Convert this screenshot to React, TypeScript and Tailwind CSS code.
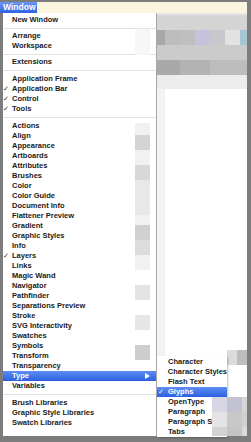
import React from "react";

type Item = { label: string; check?: boolean; active?: boolean; sub?: boolean } | "sep";

const items: Item[] = [
  { label: "New Window" },
  "sep",
  { label: "Arrange" },
  { label: "Workspace" },
  "sep",
  { label: "Extensions" },
  "sep",
  { label: "Application Frame" },
  { label: "Application Bar", check: true },
  { label: "Control", check: true },
  { label: "Tools", check: true },
  "sep",
  { label: "Actions" },
  { label: "Align" },
  { label: "Appearance" },
  { label: "Artboards" },
  { label: "Attributes" },
  { label: "Brushes" },
  { label: "Color" },
  { label: "Color Guide" },
  { label: "Document Info" },
  { label: "Flattener Preview" },
  { label: "Gradient" },
  { label: "Graphic Styles" },
  { label: "Info" },
  { label: "Layers", check: true },
  { label: "Links" },
  { label: "Magic Wand" },
  { label: "Navigator" },
  { label: "Pathfinder" },
  { label: "Separations Preview" },
  { label: "Stroke" },
  { label: "SVG Interactivity" },
  { label: "Swatches" },
  { label: "Symbols" },
  { label: "Transform" },
  { label: "Transparency" },
  { label: "Type", active: true, sub: true },
  { label: "Variables" },
  "sep",
  { label: "Brush Libraries" },
  { label: "Graphic Style Libraries" },
  { label: "Swatch Libraries" },
];

const subItems: { label: string; check?: boolean; active?: boolean }[] = [
  { label: "Character" },
  { label: "Character Styles" },
  { label: "Flash Text" },
  { label: "Glyphs", check: true, active: true },
  { label: "OpenType" },
  { label: "Paragraph" },
  { label: "Paragraph S" },
  { label: "Tabs" },
];

// redaction mosaic over the shortcut column (heights in px, colours)
const shortcutBlocks: [number, string][] = [
  [16, "transparent"],
  [26, "#f6f6f6"],
  [68, "transparent"],
  [12, "#f0f0f0"],
  [15, "#d0cfd0"],
  [15, "#f0f0f0"],
  [15, "#d4d4d4"],
  [35, "#e6e6e6"],
  [10, "#f0f0f0"],
  [15, "#cbcbcb"],
  [15, "#d8d8d8"],
  [15, "#f0f0f0"],
  [15, "transparent"],
  [15, "#e0e0e0"],
  [15, "transparent"],
  [15, "#e3e3e3"],
  [15, "transparent"],
  [15, "#c8c8c8"],
];

const font = { fontFamily: '"Liberation Sans", Arial, sans-serif' };
const checkFont = { fontFamily: '"DejaVu Sans", sans-serif' };

export default function App() {
  let sepIndex = 0;
  return (
    <div
      className="w-[251px] h-[442px] bg-[#7c7c7c] pt-[2px] pr-[4px] pb-[6px] flex flex-col overflow-hidden"
      style={font}
    >
      {/* menu bar */}
      <div className="h-[11px] flex shrink-0">
        <div className="w-[37px] h-full bg-gradient-to-b from-[#6b96f2] to-[#2f62e2] text-white text-[8.5px] font-bold leading-[11px] pl-[3px]">
          Window
        </div>
        <div className="flex-1 h-full bg-[#fbf4df]" />
      </div>

      {/* main */}
      <div className="flex-1 flex pl-[3px] min-h-0">
        <div className="flex-1 relative flex">
          {/* menu */}
          <div className="w-[154px] h-full bg-white border-r border-[#a6a6a6] pt-[2px] flex flex-col relative">
            {items.map((it, i) => {
              if (it === "sep") {
                sepIndex++;
                const h = sepIndex <= 2 ? "h-[6px]" : "h-[7px]";
                return (
                  <div key={i} className={`${h} flex items-center`}>
                    <div className="w-full h-px bg-[#e3e3e3]" />
                  </div>
                );
              }
              return (
                <div
                  key={i}
                  className={`h-[10px] flex items-center text-[7.5px] font-bold leading-[10px] ${
                    it.active
                      ? "bg-gradient-to-b from-[#5f8ef4] to-[#2c5fe0] text-white"
                      : "text-[#1a1a1a]"
                  }`}
                >
                  <span className="w-[9px] text-[7px] leading-[10px] text-[#333]" style={checkFont}>
                    {it.check ? "✓" : ""}
                  </span>
                  <span className="flex-1 whitespace-nowrap">{it.label}</span>
                  {it.sub && (
                    <svg width="5" height="6" viewBox="0 0 5 6" className="mr-[6px]">
                      <path d="M0 0 L5 3 L0 6 Z" fill="white" />
                    </svg>
                  )}
                </div>
              );
            })}
            <div className="flex-1" />
            {/* shortcut mosaic overlay */}
            <div className="absolute left-[132px] top-0 w-[15px] flex flex-col pointer-events-none">
              {shortcutBlocks.map(([h, c], i) => (
                <div key={i} style={{ height: h, background: c, opacity: c === "transparent" ? 0 : 0.9 }} />
              ))}
            </div>
          </div>

          {/* background window (blurred) */}
          <div className="flex-1 h-full flex flex-col bg-white">
            <div className="h-[2px] bg-[#e6e6e6]" />
            <div className="h-[15px] bg-[#d4d4d4]" />
            <div className="h-[15px] flex">
              <div className="w-[8px] bg-[#a8a8a8]" />
              <div className="w-[15px] bg-[#bdbdbd]" />
              <div className="w-[15px] bg-[#bfbfbf]" />
              <div className="w-[15px] bg-[#c4c2dc]" />
              <div className="w-[15px] bg-[#c8c8cc]" />
              <div className="w-[15px] bg-[#e2e2e2]" />
              <div className="flex-1 bg-[#a6c6d6]" />
            </div>
            <div className="h-[15px] bg-[#cbcbcb]" />
            <div className="h-[15px] flex">
              <div className="w-[23px] bg-[#a9a9a9]" />
              <div className="w-[30px] bg-[#b3b3b3]" />
              <div className="flex-1 bg-[#bdbdbd]" />
            </div>
            <div className="h-[14px] bg-[#ececec]" />
            <div className="flex-1 flex">
              <div className="w-[8px] bg-[#f3f3f3]" />
              <div className="flex-1 flex flex-col justify-end items-end">
                <div className="h-[15px] w-[20px] flex mb-[71px]">
                  <div className="flex-1 bg-[#dcdcdc]" />
                  <div className="flex-1 bg-[#bdbdbd]" />
                </div>
              </div>
            </div>
          </div>

          {/* Type submenu */}
          <div className="absolute left-[154px] top-[343px] w-[70px] h-[81px] bg-white pt-[1px] flex flex-col shadow-[1px_1px_2px_rgba(0,0,0,0.25)] overflow-hidden">
            {subItems.map((s, i) => (
              <div
                key={i}
                className={`h-[10px] flex items-center text-[7.5px] font-bold leading-[10px] whitespace-nowrap ${
                  s.active
                    ? "bg-gradient-to-b from-[#5f8ef4] to-[#2c5fe0] text-white"
                    : "text-[#1a1a1a]"
                }`}
              >
                <span className="w-[11px] text-[7px] pl-[1px] leading-[10px]" style={checkFont}>
                  {s.check ? "✓" : ""}
                </span>
                <span>{s.label}</span>
              </div>
            ))}
          </div>

          {/* redaction mosaic over the lower right */}
          <div className="absolute left-[209px] top-[384px] w-[35px] h-[39px] flex flex-col pointer-events-none">
            <div className="h-[15px] flex">
              <div className="w-[15px] bg-[#d6d6e4]" />
              <div className="w-[15px] bg-[#c2c2d2]" />
              <div className="flex-1 bg-[#d6d6d6]" />
            </div>
            <div className="h-[15px] flex">
              <div className="w-[15px] bg-[#e4e4e4]" />
              <div className="w-[15px] bg-[#c8c8c8]" />
              <div className="flex-1 bg-[#d0d0d0]" />
            </div>
            <div className="flex-1 flex">
              <div className="w-[15px] bg-[#d2d2d2]" />
              <div className="w-[15px] bg-[#c4c4c4]" />
              <div className="flex-1 bg-[#dadada]" />
            </div>
          </div>
        </div>
      </div>
    </div>
  );
}
